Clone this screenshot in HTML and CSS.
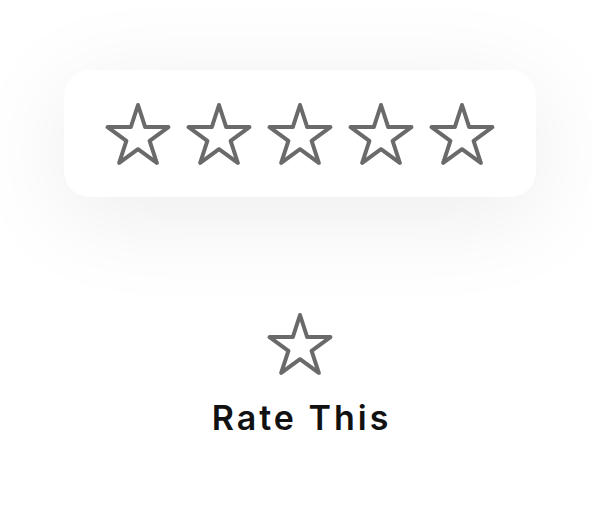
FILE: index.html
```html
<!DOCTYPE html>
<html>
<head>
<meta charset="utf-8">
<link rel="stylesheet" href="styles.css">
</head>
<body>
<main class="page">
  <div class="card">
    <svg class="star" viewBox="0 0 66 64" width="66" height="64"><polygon points="33,3 40.18,25.11 63.43,25.11 44.62,38.78 51.81,60.89 33,47.22 14.19,60.89 21.38,38.78 2.57,25.11 25.82,25.11"/></svg>
    <svg class="star" viewBox="0 0 66 64" width="66" height="64"><polygon points="33,3 40.18,25.11 63.43,25.11 44.62,38.78 51.81,60.89 33,47.22 14.19,60.89 21.38,38.78 2.57,25.11 25.82,25.11"/></svg>
    <svg class="star" viewBox="0 0 66 64" width="66" height="64"><polygon points="33,3 40.18,25.11 63.43,25.11 44.62,38.78 51.81,60.89 33,47.22 14.19,60.89 21.38,38.78 2.57,25.11 25.82,25.11"/></svg>
    <svg class="star" viewBox="0 0 66 64" width="66" height="64"><polygon points="33,3 40.18,25.11 63.43,25.11 44.62,38.78 51.81,60.89 33,47.22 14.19,60.89 21.38,38.78 2.57,25.11 25.82,25.11"/></svg>
    <svg class="star" viewBox="0 0 66 64" width="66" height="64"><polygon points="33,3 40.18,25.11 63.43,25.11 44.62,38.78 51.81,60.89 33,47.22 14.19,60.89 21.38,38.78 2.57,25.11 25.82,25.11"/></svg>
  </div>
  <div class="rate">
    <svg class="star" viewBox="0 0 66 64" width="66" height="64"><polygon points="33,3 40.18,25.11 63.43,25.11 44.62,38.78 51.81,60.89 33,47.22 14.19,60.89 21.38,38.78 2.57,25.11 25.82,25.11"/></svg>
    <div class="rate-label">Rate This</div>
  </div>
</main>
</body>
</html>
```
FILE: styles.css
```css
html, body {
  margin: 0;
  padding: 0;
  background: #ffffff;
}

.page {
  display: flex;
  flex-direction: column;
  align-items: center;
  padding: 70px 0 0 6px;
  font-family: Inter, "Noto Sans", sans-serif;
}

.card {
  display: flex;
  gap: 15px;
  align-items: center;
  width: 472px;
  box-sizing: border-box;
  padding: 32px 41px 31px;
  background: #ffffff;
  border-radius: 26px;
  box-shadow: 0 18px 100px rgba(0, 0, 0, 0.08);
}

.star {
  display: block;
  flex: none;
}

.star polygon {
  fill: none;
  stroke: #6a6a6a;
  stroke-width: 4;
  stroke-linejoin: round;
}

.rate {
  display: flex;
  flex-direction: column;
  align-items: center;
  margin-top: 115px;
  gap: 22px;
}

.rate-label {
  font-size: 34px;
  line-height: 40px;
  font-weight: 600;
  color: #111111;
  letter-spacing: 3px;
  padding-left: 3px;
}
```
